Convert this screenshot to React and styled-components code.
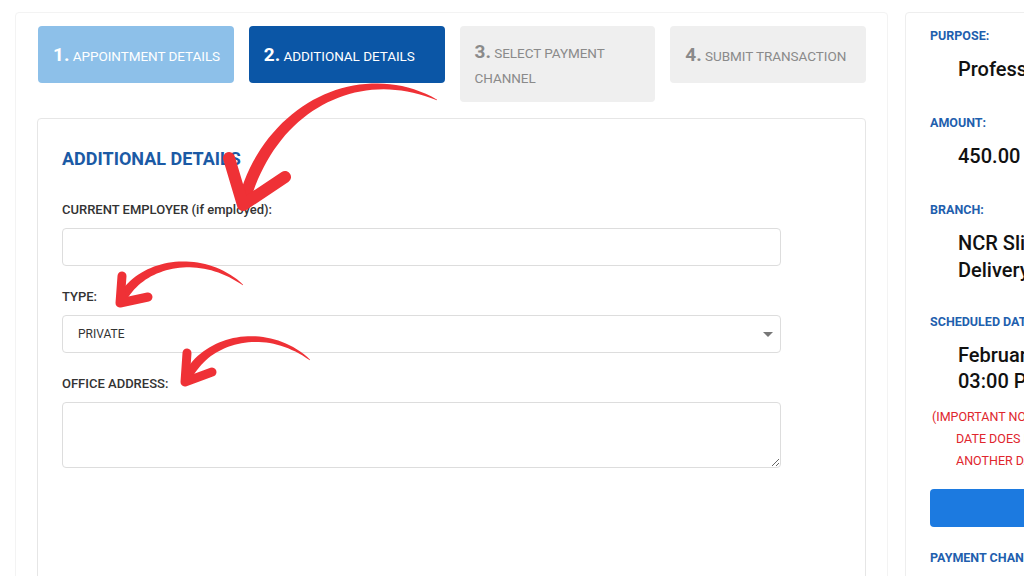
import styled, { createGlobalStyle } from 'styled-components';

/*
 *  Component: App
 *  Description: Transaction wizard - step 2 (additional details) with a summary sidebar
 *  About: Red hand-drawn arrows are an SVG overlay pointing at the form labels
 */

const steps = [
  { num: '1.', label: 'APPOINTMENT DETAILS', state: 'done' },
  { num: '2.', label: 'ADDITIONAL DETAILS', state: 'active' },
  { num: '3.', label: 'SELECT PAYMENT CHANNEL', state: 'todo' },
  { num: '4.', label: 'SUBMIT TRANSACTION', state: 'todo' },
];

// lh = line height, mb = space below the value
const summary = [
  { label: 'PURPOSE:', lines: ['Professional Regulation'], lh: 26, mb: 33 },
  { label: 'AMOUNT:', lines: ['450.00'], lh: 26, mb: 33 },
  { label: 'BRANCH:', lines: ['NCR Slip and', 'Delivery Center'], lh: 27, mb: 30 },
  { label: 'SCHEDULED DATE:', lines: ['February 28, 2024', '03:00 PM - 04:00 PM'], lh: 26, mb: 12 },
];

// arrows in page coords: tail, two controls, tip, barbs, width
const arrows = [
  { p: [[437, 100], [360, 62], [268, 106], [243, 205]], barbs: [[229, 158], [285, 177]], w: 12 },
  { p: [[243, 285], [200, 250], [138, 262], [120, 303]], barbs: [[122, 276], [148, 297]], w: 9 },
  { p: [[310, 360], [265, 323], [203, 338], [185, 382]], barbs: [[187, 353], [212, 372]], w: 9 },
];

const bez = (p, t) => {
  const u = 1 - t;
  const a = u * u * u, b = 3 * u * u * t, c = 3 * u * t * t, d = t * t * t;
  return [
    a * p[0][0] + b * p[1][0] + c * p[2][0] + d * p[3][0],
    a * p[0][1] + b * p[1][1] + c * p[2][1] + d * p[3][1],
  ];
};

// tapered body: thin tail, full width near the tip
const taperPath = (p, w) => {
  const n = 40;
  const left = [], right = [];
  for (let i = 0; i <= n; i++) {
    const t = i / n;
    const [x, y] = bez(p, t);
    const [x2, y2] = bez(p, Math.min(1, t + 0.01));
    const [x1, y1] = bez(p, Math.max(0, t - 0.01));
    let dx = x2 - x1, dy = y2 - y1;
    const len = Math.hypot(dx, dy) || 1;
    dx /= len; dy /= len;
    const half = (0.4 + (w - 0.4) * Math.min(1, Math.pow(t, 0.6) * 1.1)) / 2;
    left.push([x - dy * half, y + dx * half]);
    right.push([x + dy * half, y - dx * half]);
  }
  const pts = [...left, ...right.reverse()];
  return 'M' + pts.map(([x, y]) => `${x.toFixed(1)},${y.toFixed(1)}`).join('L') + 'Z';
};

const Arrows = () => (
  <Overlay width="1024" height="576" viewBox="0 0 1024 576">
    {arrows.map((a, i) => {
      const tip = a.p[3];
      return (
        <g key={i} fill="#ef3136" stroke="#ef3136" strokeLinecap="round" strokeLinejoin="round">
          <path d={taperPath(a.p, a.w)} stroke="none" />
          <path
            d={`M${a.barbs[0][0]},${a.barbs[0][1]}L${tip[0]},${tip[1]}L${a.barbs[1][0]},${a.barbs[1][1]}`}
            fill="none"
            strokeWidth={a.w}
          />
        </g>
      );
    })}
  </Overlay>
);

const App = () => {
  return (
    <Page>
      <GlobalStyle />
      <Main>
        <Steps>
          {steps.map((s) => (
            <Step key={s.num} state={s.state}>
              <span>
                <StepNum>{s.num}</StepNum> {s.label}
              </span>
            </Step>
          ))}
        </Steps>
        <Card>
          <CardTitle>ADDITIONAL DETAILS</CardTitle>
          <Field>
            <Label>CURRENT EMPLOYER (if employed):</Label>
            <TextInput type="text" defaultValue="" />
          </Field>
          <Field>
            <Label>TYPE:</Label>
            <SelectWrap>
              <Select defaultValue="PRIVATE">
                <option value="PRIVATE">PRIVATE</option>
                <option value="GOVERNMENT">GOVERNMENT</option>
              </Select>
              <Caret />
            </SelectWrap>
          </Field>
          <Field>
            <Label>OFFICE ADDRESS:</Label>
            <TextArea defaultValue="" />
          </Field>
        </Card>
      </Main>

      <Sidebar>
        {summary.map((item) => (
          <div key={item.label}>
            <SideLabel>{item.label}</SideLabel>
            <SideValue lh={item.lh} mb={item.mb}>
              {item.lines.map((l) => (
                <div key={l}>{l}</div>
              ))}
            </SideValue>
          </div>
        ))}
        <Note>
          <NoteLine>(IMPORTANT NOTE: IF THE SCHEDULED</NoteLine>
          <NoteLine indent>DATE DOES NOT SUIT YOU, CHOOSE</NoteLine>
          <NoteLine indent>ANOTHER DATE)</NoteLine>
        </Note>
        <SideButton>RESCHEDULE</SideButton>
        <SideLabel>PAYMENT CHANNEL:</SideLabel>
      </Sidebar>

      <Arrows />
    </Page>
  );
};

const GlobalStyle = createGlobalStyle`
  html, body {
    margin: 0;
    padding: 0;
    background: #ffffff;
    font-family: Roboto, "Liberation Sans", Arial, sans-serif;
  }
`;

// Whole screen, two columns
const Page = styled.div`
  position: relative;
  display: flex;
  align-items: flex-start;
  gap: 17px;
  height: 576px;
  width: 1024px;
  padding: 12px 0 0 15px;
  box-sizing: border-box;
  overflow: hidden;
`;

// Left panel holding the stepper and form card
const Main = styled.div`
  flex: 0 0 873px;
  height: 600px;
  box-sizing: border-box;
  padding: 13px 21px 0 21px;
  border: 1px solid #f3f3f3;
  border-radius: 4px;
  background: #fff;
`;

// Stepper row
const Steps = styled.div`
  display: grid;
  grid-template-columns: repeat(4, 1fr);
  gap: 15px;
  align-items: start;
  padding-left: 1px;
`;

const stepColors = {
  done: { bg: '#8dc0e9', fg: '#ffffff' },
  active: { bg: '#0b56a6', fg: '#ffffff' },
  todo: { bg: '#efefef', fg: '#8a8a8a' },
};

// Single step pill
const Step = styled.div`
  display: flex;
  align-items: center;
  min-height: 57px;
  box-sizing: border-box;
  padding: 13px 6px 11px 15px;
  border-radius: 4px;
  background: ${(p) => stepColors[p.state].bg};
  color: ${(p) => stepColors[p.state].fg};
  font-size: 13.5px;
  line-height: 25px;
  letter-spacing: -0.05px;
`;

const StepNum = styled.span`
  font-size: 19px;
  font-weight: 700;
  letter-spacing: 0;
`;

// Form card
const Card = styled.div`
  margin-top: 16px;
  height: 520px;
  box-sizing: border-box;
  padding: 29px 84px 0 24px;
  border: 1px solid #e6e6e6;
  border-radius: 4px;
  background: #fff;
`;

const CardTitle = styled.h2`
  margin: 0 0 32px;
  font-size: 18px;
  line-height: 22px;
  font-weight: 700;
  color: #1b5aa5;
`;

const Field = styled.div`
  margin-bottom: 23px;
`;

const Label = styled.label`
  display: block;
  margin-bottom: 10px;
  font-size: 13px;
  line-height: 16px;
  font-weight: 500;
  color: #333;
`;

const TextInput = styled.input`
  display: block;
  width: 100%;
  height: 38px;
  box-sizing: border-box;
  border: 1px solid #dddddd;
  border-radius: 4px;
  background: #fff;
  outline: none;
`;

const SelectWrap = styled.div`
  position: relative;
`;

const Select = styled.select`
  display: block;
  width: 100%;
  height: 38px;
  box-sizing: border-box;
  padding: 0 15px;
  border: 1px solid #dddddd;
  border-radius: 4px;
  background: #fff;
  appearance: none;
  font-family: Roboto, "Liberation Sans", Arial, sans-serif;
  font-size: 12px;
  color: #333;
  outline: none;
`;

// Dropdown triangle drawn over the select
const Caret = styled.span`
  position: absolute;
  right: 8px;
  top: 17px;
  width: 0;
  height: 0;
  border-left: 5px solid transparent;
  border-right: 5px solid transparent;
  border-top: 5px solid #777;
`;

const TextArea = styled.textarea`
  display: block;
  width: 100%;
  height: 66px;
  box-sizing: border-box;
  border: 1px solid #dddddd;
  border-radius: 4px;
  background: #fff;
  resize: both;
  outline: none;
`;

// Summary sidebar, clipped at the right edge of the screen
const Sidebar = styled.div`
  flex: 0 0 320px;
  height: 600px;
  box-sizing: border-box;
  padding: 15px 25px 0 24px;
  border: 1px solid #eeeeee;
  border-radius: 4px;
  background: #fff;
`;

const SideLabel = styled.div`
  font-size: 12.5px;
  line-height: 16px;
  font-weight: 700;
  color: #1f5fae;
  margin-bottom: 12px;
`;

const SideValue = styled.div`
  padding-left: 28px;
  font-size: 20px;
  line-height: ${(p) => p.lh}px;
  font-weight: 500;
  color: #111;
  white-space: nowrap;
  margin-bottom: ${(p) => p.mb}px;
`;

const Note = styled.div`
  margin-bottom: 17px;
`;

const NoteLine = styled.div`
  padding-left: ${(p) => (p.indent ? '26px' : '2px')};
  font-size: 12.5px;
  line-height: 22px;
  color: #e0262d;
  white-space: nowrap;
`;

const SideButton = styled.button`
  display: block;
  width: 100%;
  height: 38px;
  margin-bottom: 23px;
  border: none;
  border-radius: 4px;
  background: #1c7ae0;
  color: #fff;
  font-family: Roboto, "Liberation Sans", Arial, sans-serif;
  font-size: 13px;
  font-weight: 500;
`;

// Annotation layer on top of the page
const Overlay = styled.svg`
  position: absolute;
  left: 0;
  top: 0;
  pointer-events: none;
`;

export default App;
